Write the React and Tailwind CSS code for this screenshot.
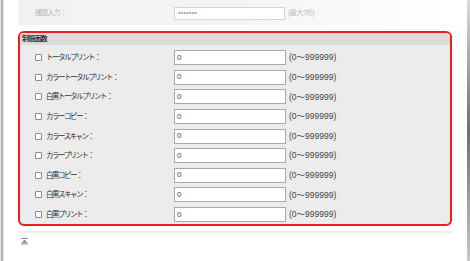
const rows = [
  "トータルプリント：",
  "カラートータルプリント：",
  "白黒トータルプリント：",
  "カラーコピー：",
  "カラースキャン：",
  "カラープリント：",
  "白黒コピー：",
  "白黒スキャン：",
  "白黒プリント：",
];

const jp = "font-['Liberation_Sans','Noto_Sans_CJK_JP',sans-serif]";

function LimitRow({ label }) {
  return (
    <div className="flex items-center h-[19.6px]">
      <span className="w-[7px] h-[7px] border border-[#8a8a8a] bg-white rounded-[1px] mr-[4px]" />
      <span className="w-[128px] text-[7.5px] tracking-[-1.5px] text-[#333]">{label}</span>
      <div className="w-[112px] h-[15px] border border-[#a9a9a9] bg-white flex items-center pl-[2px] text-[8px] text-[#444]">
        0
      </div>
      <span className="ml-[3px] text-[8.5px] text-[#444]">(0〜999999)</span>
    </div>
  );
}

export default function App() {
  return (
    <div className={`w-[470px] h-[261px] bg-white flex overflow-hidden ${jp}`}>
      <div className="w-[4px] h-full bg-gradient-to-r from-white via-[#9a9a9a] to-white" />
      <div className="w-[463px] h-full pl-[14px] pr-[15px]">
        <div className="h-[25px] bg-gradient-to-r from-[#f2f2f2] via-[#f4f4f4] to-white flex items-center pt-[1px]">
          <span className="w-[156px] pl-[17px] text-[7px] tracking-[-0.8px] text-[#b5b5b5]">確認入力：</span>
          <div className="w-[111px] h-[13px] border border-[#d4d4d4] bg-white flex items-center pl-[3px] text-[7px] text-[#999] tracking-[0.3px]">
            •••••••
          </div>
          <span className="ml-[3px] text-[7px] tracking-[-0.6px] text-[#bbb]">(最大7桁)</span>
        </div>
        <div className="mt-[6px] border-2 border-[#ee1c1c] rounded-[6px] bg-[#ececec] overflow-hidden h-[195px]">
          <div className="h-[12px] bg-[#dcdcdc] flex items-center pl-[2px] text-[7px] font-bold tracking-[-0.8px] text-[#333]">
            制限面数
          </div>
          <div className="pt-[3px] pl-[15px]">
            {rows.map((r) => (
              <LimitRow key={r} label={r} />
            ))}
          </div>
        </div>
        <div className="mt-[5px] h-[2px] bg-[#eeeeee]" />
        <div className="mt-[5px] pl-[3px] flex flex-col items-start">
          <svg width="7" height="7" viewBox="0 0 7 7">
            <rect x="0" y="0" width="7" height="1" fill="#8c8c8c" />
            <path d="M3.5 1.5 L6.5 5 H0.5 Z" fill="#8c8c8c" />
            <rect x="0" y="5.5" width="7" height="1" fill="#8c8c8c" />
          </svg>
        </div>
      </div>
      <div className="w-[3px] h-full bg-gradient-to-b from-[#dcdcdc] via-[#6f6f6f] to-[#c8c8c8]" />
    </div>
  );
}
